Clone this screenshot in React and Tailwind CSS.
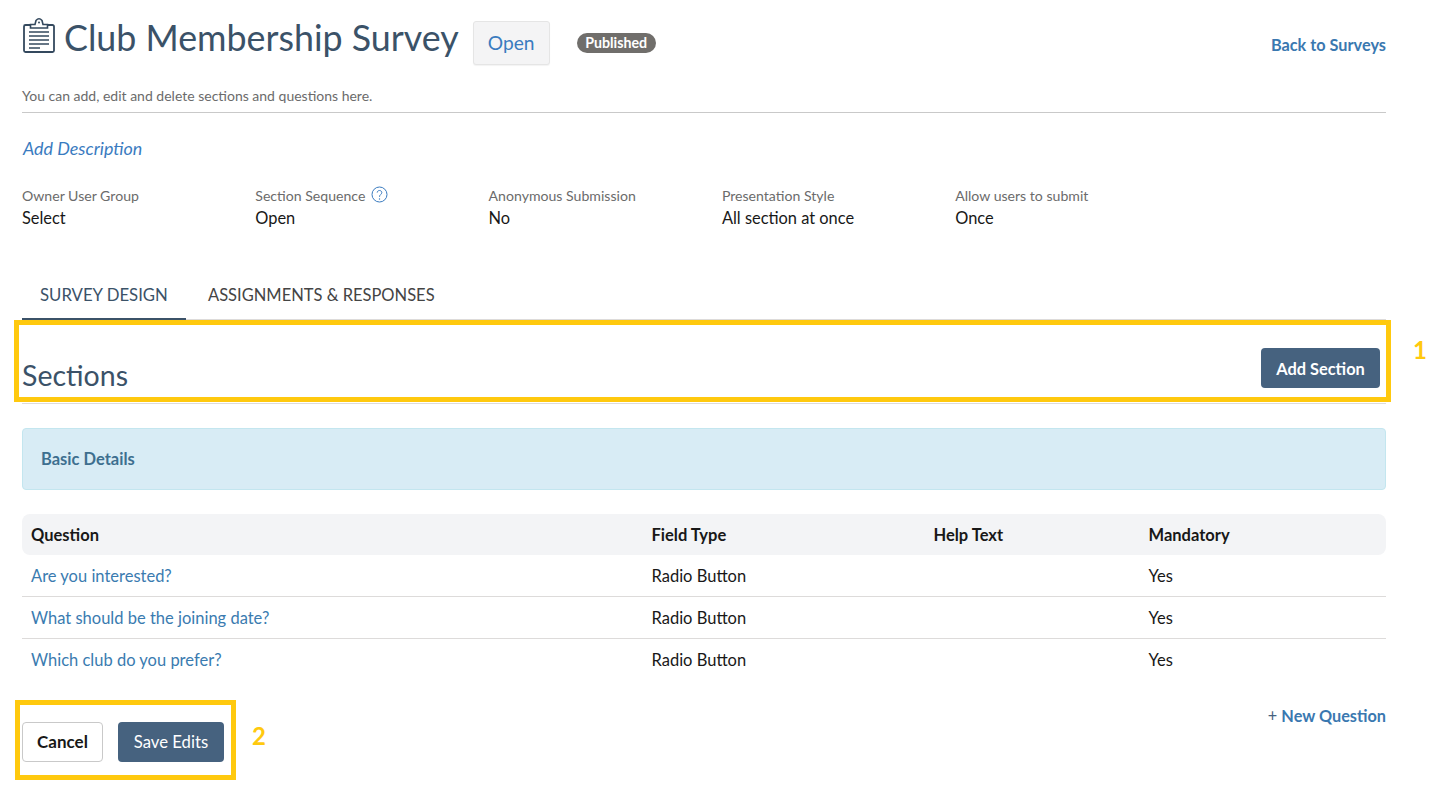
const rows = ["Are you interested?", "What should be the joining date?", "Which club do you prefer?"];

const meta = [
  { label: "Owner User Group", value: "Select" },
  { label: "Section Sequence", value: "Open", help: true },
  { label: "Anonymous Submission", value: "No" },
  { label: "Presentation Style", value: "All section at once" },
  { label: "Allow users to submit", value: "Once" },
];

function ClipboardIcon() {
  return (
    <svg width="34" height="36" viewBox="0 0 34 36" fill="none" stroke="#34495e" className="shrink-0">
      <path d="M9 8H3.500A1.500 1.500 0 0 0 2 9.500V33.500A1.500 1.500 0 0 0 3.500 35H30.500A1.500 1.500 0 0 0 32 33.500V9.500A1.500 1.500 0 0 0 30.500 8H25" strokeWidth="1.800" />
      <path d="M8.500 11V7.500H13L14 3.500Q17 0 20 3.500L21 7.500H25.500V11Z" strokeWidth="1.600" />
      <circle cx="17" cy="5.500" r="1" fill="#34495e" stroke="none" />
      <path d="M7 15H27M7 19H27M7 23H27M7 27H27M7 31H18" strokeWidth="1.700" />
    </svg>
  );
}

function HelpIcon() {
  return (
    <svg width="17" height="17" viewBox="0 0 17 17" fill="none" stroke="#3a7bbf" strokeWidth="1" className="ml-[6px] mt-[-3px]">
      <circle cx="8.500" cy="8.500" r="7.500" />
      <path d="M6.200 6.600C6.200 3.800 10.800 3.800 10.800 6.600C10.800 8.500 8.500 8.400 8.500 10.800" />
      <circle cx="8.500" cy="13" r="0.700" fill="#3a7bbf" stroke="none" />
    </svg>
  );
}

export default function App() {
  return (
    <div className="relative w-[1448px] h-[803px] overflow-hidden bg-white pl-[22px] pr-[62px] font-['Lato','Noto_Sans',sans-serif] text-[#181818]">
      <div className="flex items-start h-[85px] pt-[17px]">
        <ClipboardIcon />
        <h1 className="ml-[8px] mt-[-1px] text-[35.800px] leading-[44px] text-[#3b5268]">Club Membership Survey</h1>
        <button className="ml-[14px] mt-[4px] w-[77px] h-[44px] pt-[1px] rounded-[3px] border border-[#e5e5e5] bg-[#f4f4f5] text-[19.200px] text-[#3a7bbf] shadow-[0_1px_1px_rgba(0,0,0,0.05)]">Open</button>
        <span className="ml-[27px] mt-[16px] flex items-center justify-center w-[79px] h-[20px] rounded-full bg-[#706e6b] text-[14.200px] font-bold text-white">Published</span>
        <a className="ml-auto mt-[18px] text-[16.300px] leading-[20px] font-bold text-[#3a78b0]">Back to Surveys</a>
      </div>

      <p className="h-[27px] border-b border-[#c9c9c9] text-[14px] leading-[22px] text-[#6b6b6b] box-content pb-0">You can add, edit and delete sections and questions here.</p>

      <a className="block mt-[23px] pl-[1px] text-[17.900px] leading-[24px] italic text-[#3a7bbf]">Add Description</a>

      <div className="flex mt-[26px]">
        {meta.map((m) => (
          <div key={m.label} className="w-[233.300px]">
            <div className="flex items-center h-[20px] text-[14.100px] text-[#6b6b6b]">
              {m.label}
              {m.help && <HelpIcon />}
            </div>
            <div className="h-[24px] text-[16.400px] leading-[24px]">{m.value}</div>
          </div>
        ))}
      </div>

      <div className="flex mt-[40px] h-[50px] border-b border-[#dddbda]">
        <div className="w-[164px] h-[50px] border-b-2 border-[#3b5268] pt-[13px] pl-[18px] text-[16.750px] leading-[24px] text-[#3b5268]">SURVEY DESIGN</div>
        <div className="ml-[22px] pt-[13px] text-[16.500px] leading-[24px] text-[#444]">ASSIGNMENTS &amp; RESPONSES</div>
      </div>

      <div className="flex items-end justify-between h-[84px] border-b border-[#dddbda] pb-[10px]">
        <h2 className="text-[28.500px] leading-[36px] text-[#3b5268]">Sections</h2>
        <button className="mr-[6px] mb-[5px] w-[119px] h-[40px] pt-[2px] rounded-[4px] bg-[#46627f] text-[16.400px] font-bold text-white">Add Section</button>
      </div>

      <div className="mt-[24px] flex items-center h-[62px] rounded-[4px] border border-[#c3e6ef] bg-[#d8ecf5] pl-[18px] text-[16.500px] font-bold text-[#3d6f8f]">Basic Details</div>

      <div className="mt-[24px]">
        <div className="flex items-center h-[41px] pt-[2px] rounded-[8px] bg-[#f3f4f6] text-[16.500px] font-bold">
          <div className="w-[620px] pl-[9px]">Question</div>
          <div className="w-[282px] pl-[9.500px]">Field Type</div>
          <div className="w-[215px] pl-[9.500px]">Help Text</div>
          <div className="pl-[9.500px]">Mandatory</div>
        </div>
        {rows.map((q, i) => (
          <div key={q} className={`flex items-center h-[42px] text-[16.500px] ${i < 2 ? "border-b border-[#dddbda] pt-[1px]" : ""}`}>
            <div className="w-[620px] pl-[9px] text-[#3a7bb0]">{q}</div>
            <div className="w-[282px] pl-[9.500px]">Radio Button</div>
            <div className="w-[215px] pl-[9.500px]"></div>
            <div className="pl-[9.500px]">Yes</div>
          </div>
        ))}
      </div>

      <div className="flex justify-between mt-[23px]">
        <div className="flex gap-[15px] mt-[18px]">
          <button className="w-[81px] h-[40px] rounded-[4px] border border-[#c9c9c9] bg-white text-[17px] font-bold">Cancel</button>
          <button className="w-[106px] h-[40px] pt-[1px] rounded-[4px] bg-[#46627f] text-[16.700px] text-white">Save Edits</button>
        </div>
        <a className="text-[16.300px] leading-[24px] font-bold text-[#3a78b0]"><span className="font-normal text-[#46627f]">+ </span>New Question</a>
      </div>

      {/* yellow callouts drawn on top of the screenshot */}
      <div className="absolute left-[14px] top-[320px] w-[1377px] h-[82px] border-[5px] border-[#ffc90e]"></div>
      <div className="absolute left-[1413px] top-[335px] text-[24px] leading-[30px] font-bold text-[#ffc90e]">1</div>
      <div className="absolute left-[15px] top-[700px] w-[221px] h-[80px] border-[5px] border-[#ffc90e]"></div>
      <div className="absolute left-[252px] top-[721px] text-[24px] leading-[30px] font-bold text-[#ffc90e]">2</div>
    </div>
  );
}
